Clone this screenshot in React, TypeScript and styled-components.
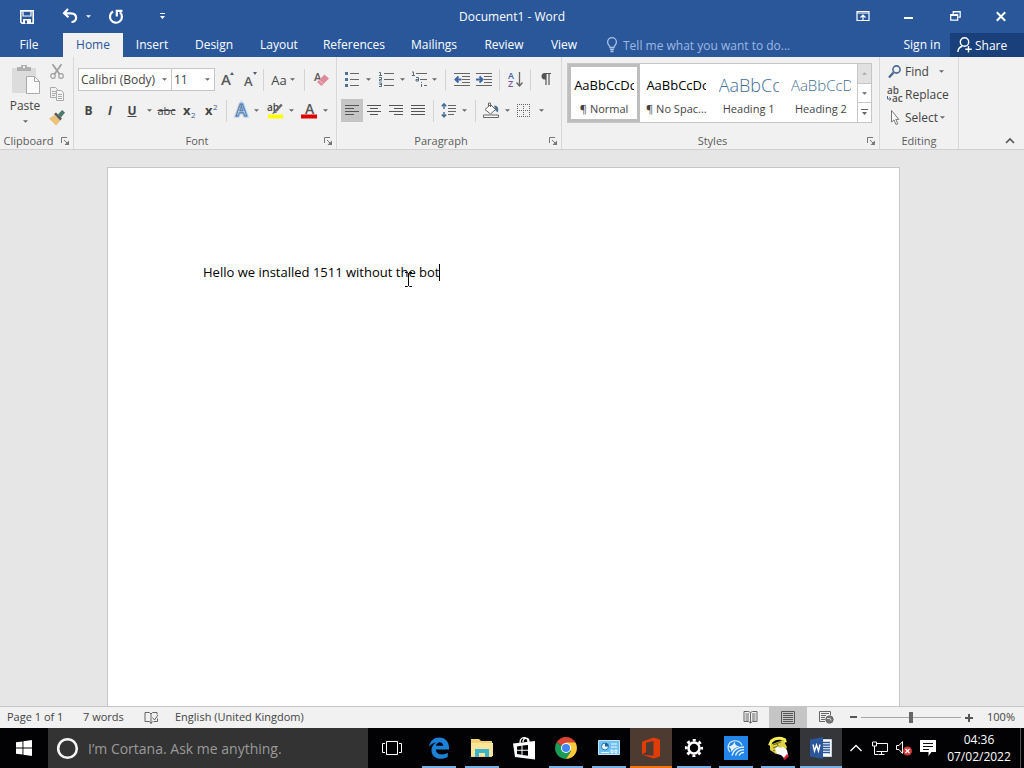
import React from "react";
import styled, { createGlobalStyle } from "styled-components";

const GlobalStyle = createGlobalStyle`
  *, *::before, *::after { box-sizing: border-box; }
  body { margin: 0; font-family: "Open Sans", "Noto Sans", sans-serif; font-size: 12px; color: #444; }
  button, input, select { font: inherit; color: inherit; margin: 0; padding: 0; border: 0; background: none; border-radius: 0; }
  p, h1 { margin: 0; }
  svg { display: block; flex: none; overflow: visible; }
`;

const Shell = styled.div`
  display: flex;
  flex-direction: column;
  min-height: 100vh;
`;

/* ---------- title bar and tabs ---------- */

const TitleBar = styled.header`
  display: grid;
  grid-template-columns: 1fr auto 1fr;
  align-items: center;
  height: 33px;
  background: #2a579a;
  color: #fff;
`;

const QuickAccess = styled.div`
  display: flex;
  align-items: center;
  padding-left: 12px;
`;

const DocTitle = styled.h1`
  font-size: 12px;
  font-weight: 400;
  line-height: 33px;
`;

const WindowControls = styled.div`
  display: flex;
  justify-content: flex-end;
`;

const PlainButton = styled.button<{ $w: number; $h?: number; $on?: boolean; $ml?: number }>`
  display: flex;
  align-items: center;
  justify-content: center;
  flex: none;
  width: ${(p) => p.$w}px;
  height: ${(p) => p.$h ?? 23}px;
  margin-left: ${(p) => p.$ml ?? 0}px;
  background: ${(p) => (p.$on ? "#c5c5c5" : "none")};
`;

const TabBar = styled.nav`
  display: flex;
  height: 24px;
  background: #2a579a;
  color: #fff;
`;

const Tab = styled.button<{ $w: number; $active?: boolean }>`
  width: ${(p) => p.$w}px;
  height: 24px;
  line-height: 24px;
  text-align: center;
  white-space: nowrap;
  background: ${(p) => (p.$active ? "#f1f1f1" : "none")};
  color: ${(p) => (p.$active ? "#2a579a" : "#fff")};
`;

const FileTab = styled(Tab)`
  margin-right: 5px;
`;

const TellMe = styled.label`
  display: flex;
  align-items: center;
  gap: 5px;
  flex: 1;
  padding-left: 15px;
  input { flex: 1; min-width: 0; height: 24px; outline: 0; }
  input::placeholder { color: #9db8e2; opacity: 1; }
`;

const ShareButton = styled.button`
  display: flex;
  align-items: center;
  gap: 3px;
  width: 74px;
  height: 24px;
  padding-left: 7px;
  background: #19407a;
`;

/* ---------- ribbon ---------- */

const Ribbon = styled.section`
  display: flex;
  height: 93px;
  background: #f1f1f1;
  border-bottom: 1px solid #d2d0d0;
`;

const GroupBox = styled.div<{ $w: number }>`
  display: flex;
  flex-direction: column;
  flex: none;
  width: ${(p) => p.$w}px;
  padding-top: 3px;
  border-right: 1px solid #d8d8d8;
`;

const GroupBody = styled.div`
  flex: 1;
  min-height: 0;
`;

const GroupFooter = styled.div`
  display: flex;
  height: 16px;
  align-items: center;
  line-height: 16px;
  color: #5c5c5c;
`;

const GroupLabel = styled.span`
  flex: 1;
  text-align: center;
  font-size: 11px;
`;

const Rows = styled.div`
  display: flex;
  flex-direction: column;
  gap: 8px;
  padding: 8px 0 0 4px;
`;

const Row = styled.div`
  display: flex;
  align-items: center;
  height: 23px;
`;

const Divider = styled.i<{ $ml: number; $mr: number }>`
  flex: none;
  width: 1px;
  height: 22px;
  margin: 0 ${(p) => p.$mr}px 0 ${(p) => p.$ml}px;
  background: #d4d4d4;
`;

const ClipboardBody = styled.div`
  display: flex;
`;

const PasteButton = styled.button`
  display: flex;
  flex-direction: column;
  align-items: center;
  width: 46px;
  margin-left: 2px;
  padding-top: 5px;
  line-height: 16px;
  svg + span { margin: 3px 0 6px; }
`;

const ClipboardTools = styled.div`
  display: flex;
  flex-direction: column;
`;

const Combo = styled.label<{ $w: number; $joined?: boolean }>`
  display: grid;
  grid-template-columns: 1fr 12px;
  align-items: center;
  width: ${(p) => p.$w}px;
  height: 23px;
  border: 1px solid #c6c6c6;
  border-left-width: ${(p) => (p.$joined ? 0 : 1)}px;
  background: #fff;
  select {
    grid-area: 1 / 1 / 2 / 3;
    appearance: none;
    width: 100%;
    height: 21px;
    padding-left: 2px;
  }
  svg { grid-area: 1 / 2; margin-left: 3px; pointer-events: none; }
`;

const Letter = styled.span<{ $size?: number; $bold?: boolean; $italic?: boolean; $line?: string }>`
  font-size: ${(p) => p.$size ?? 13}px;
  font-weight: ${(p) => (p.$bold ? 700 : 400)};
  font-style: ${(p) => (p.$italic ? "italic" : "normal")};
  text-decoration: ${(p) => p.$line ?? "none"};
  line-height: 18px;
`;

const Gallery = styled.div`
  display: flex;
  height: 60px;
  margin: 3px 7px 0 5px;
  border: 1px solid #c6c6c6;
  background: #fff;
`;

const StyleTile = styled.button<{ $selected?: boolean }>`
  display: flex;
  flex-direction: column;
  align-items: center;
  flex: 1;
  min-width: 0;
  padding-top: 3px;
  border: 3px solid ${(p) => (p.$selected ? "#bebebe" : "transparent")};
`;

const StyleSample = styled.span<{ $heading?: boolean; $size: number }>`
  width: 60px;
  overflow: hidden;
  white-space: nowrap;
  text-align: left;
  font-weight: ${(p) => (p.$heading ? 300 : 400)};
  font-size: ${(p) => p.$size}px;
  line-height: 30px;
  color: ${(p) => (p.$heading ? "#3f6f95" : "#000")};
`;

const StyleName = styled.span`
  white-space: nowrap;
  font-size: 11px;
  line-height: 20px;
`;

const GalleryScroll = styled.div`
  display: flex;
  flex-direction: column;
  width: 14px;
  border-left: 1px solid #c6c6c6;
`;

const ScrollButton = styled.button<{ $off?: boolean }>`
  display: flex;
  align-items: center;
  justify-content: center;
  flex: 1;
  background: ${(p) => (p.$off ? "#e1e1e1" : "#fff")};
  & + & { border-top: 1px solid #c6c6c6; }
`;

const EditingList = styled.div`
  display: flex;
  flex-direction: column;
  padding-left: 7px;
`;

const EditingButton = styled.button<{ $gap: number }>`
  display: flex;
  align-items: center;
  height: 23px;
  span { margin: 0 ${(p) => p.$gap}px 0 2px; }
`;

const RibbonEnd = styled.div`
  display: flex;
  flex: 1;
  align-items: flex-end;
  justify-content: flex-end;
  padding-right: 4px;
`;

/* ---------- document ---------- */

const Workspace = styled.main`
  display: flex;
  flex: 1;
  justify-content: center;
  padding: 17px 17px 0 0;
  background: #e6e6e6;
`;

const Paper = styled.article`
  position: relative;
  width: 793px;
  max-width: 100%;
  padding: 95px 95px 0;
  background: #fff;
  border: 1px solid #c6c6c6;
  border-bottom: 0;
`;

const Paragraph = styled.p`
  display: flex;
  align-items: center;
  font-size: 13px;
  line-height: 19px;
  color: #000;
`;

const Caret = styled.i`
  width: 1px;
  height: 17px;
  background: #000;
`;

const Pointer = styled.svg`
  position: absolute;
  left: 296px;
  top: 104px;
`;

/* ---------- status bar ---------- */

const StatusBar = styled.footer`
  display: flex;
  align-items: center;
  height: 22px;
  padding: 0 9px 0 7px;
  background: #f1f1f1;
  border-top: 1px solid #c6c6c6;
  font-size: 11px;
  line-height: 20px;
`;

const StatusItem = styled.span<{ $w?: number }>`
  width: ${(p) => (p.$w ? p.$w + "px" : "auto")};
  height: 21px;
  white-space: nowrap;
`;

const Language = styled(StatusItem)`
  margin-left: 16px;
`;

const StatusRight = styled.div`
  display: flex;
  align-items: center;
  margin-left: auto;
`;

const ZoomRange = styled.input`
  appearance: none;
  width: 100px;
  height: 21px;
  background: linear-gradient(#a6a6a6, #a6a6a6) center / 100% 1px no-repeat;
  &::-webkit-slider-thumb { appearance: none; width: 4px; height: 11px; background: #666; }
`;

const ZoomValue = styled.span`
  width: 38px;
  height: 21px;
  text-align: right;
`;

/* ---------- taskbar ---------- */

const TaskBar = styled.footer`
  display: flex;
  height: 40px;
  background: #020204;
  color: #fff;
`;

const SearchBox = styled.label`
  display: flex;
  align-items: center;
  flex: 0 1 320px;
  gap: 9px;
  padding-left: 8px;
  background: #333;
  input { flex: 1; min-width: 0; font-size: 14px; outline: 0; }
  input::placeholder { color: #9a9a9a; opacity: 1; }
`;

const Apps = styled.div`
  display: flex;
  flex: 0 1 424px;
  margin-left: 2px;
`;

const AppButton = styled.button<{ $state?: "open" | "alert" | "active" }>`
  display: flex;
  flex: 1;
  align-items: center;
  justify-content: center;
  background-color: ${(p) => (p.$state === "alert" ? "#4d3a30" : p.$state === "active" ? "#34363a" : "transparent")};
  background-image: ${(p) =>
    p.$state === "alert"
      ? "linear-gradient(#f2730c, #f2730c)"
      : p.$state
        ? "linear-gradient(#76b0e4, #76b0e4)"
        : "none"};
  background-repeat: no-repeat;
  background-position: center bottom;
  background-size: ${(p) => (p.$state === "open" ? "34px" : "100%")} 2px;
`;

const Tray = styled.div`
  display: flex;
  align-items: center;
  margin-left: auto;
  padding-right: 3px;
`;

const Clock = styled.time`
  width: 76px;
  padding-left: 2px;
  text-align: center;
  line-height: 17px;
`;

const ShowDesktop = styled.button`
  width: 1px;
  height: 40px;
  margin-left: 4px;
  background: #555;
`;

/* ---------- icons ---------- */

const Down = ({ c = "#666", s = 5 }: { c?: string; s?: number }) => (
  <svg width={s} height="3" viewBox="0 0 6 3" fill={c}><path d="M0 0h6L3 3z" /></svg>
);

type IconProps = { w?: number; h?: number; children: React.ReactNode };
const Icon = ({ w = 16, h = 16, children }: IconProps) => (
  <svg width={w} height={h} viewBox={`0 0 ${w} ${h}`} fill="none" stroke="#666">{children}</svg>
);

const SaveIcon = () => (
  <Icon>
    <path d="M1.800 1.800h12.400v12.400H3l-1.200-1.200z" stroke="#fff" strokeWidth="1.600" />
    <path d="M4 2h8v5H4z" stroke="#fff" strokeWidth="1.200" />
    <path d="M4 10h8v4.500H4z" fill="#fff" stroke="none" /><path d="M6 11.500h2v3H6z" fill="#2a579a" stroke="none" />
  </Icon>
);
const UndoIcon = () => (
  <Icon>
    <path d="M6 0 2 4.200l4.500 4M2.500 4.300h6.500c7 .5 6.500 8.500.5 8.700" stroke="#fff" strokeWidth="2.200" />
  </Icon>
);
const RepeatIcon = () => (
  <Icon>
    <path d="M5 2.500a6 6 0 1 0 7 .8" stroke="#fff" strokeWidth="2.200" />
    <path d="M8.800 7.500V1.900h5.700" stroke="#fff" strokeWidth="2.200" />
  </Icon>
);
const CustomizeIcon = () => (
  <svg width="7" height="7" viewBox="0 0 7 7" fill="#fff"><path d="M1 0h5v1H1zM1 3h5L3.500 6z" /></svg>
);
const BulbIcon = () => (
  <Icon w={12}>
    <path d="M4 10.500C4 8.500 1.600 8 1.600 5a4.400 4.400 0 0 1 8.800 0c0 3-2.400 3.500-2.400 5.500zM4 12.500h4M4.500 14.500h3" stroke="#a9c1e6" strokeWidth="1.300" />
  </Icon>
);
const ShareIcon = () => (
  <Icon w={15}>
    <circle cx="7.500" cy="5" r="4.200" stroke="#fff" strokeWidth="1.400" />
    <path d="M.800 15c.3-3.500 2-5.200 4.500-5.800M11.500 9v6.500M8.300 12.300h6.500" stroke="#fff" strokeWidth="1.400" />
  </Icon>
);
const RibbonOptionsIcon = () => (
  <Icon w={14} h={12}>
    <path d="M1 .500h12v9H1zM1 2h12" stroke="#fff" strokeWidth="1.200" /><path d="M7 9V4.500M4.500 6.500 7 4l2.500 2.500" stroke="#fff" strokeWidth="1.200" />
  </Icon>
);
const MinimizeIcon = () => <Icon w={10} h={10}><path d="M0 6h9" stroke="#fff" strokeWidth="2" /></Icon>;
const RestoreIcon = () => (
  <Icon w={11} h={11}><path d="M.700 3.700h7v5.500h-7zM.200 4.500h8M3.200 3V.700h7v5.500H8.500M2.700 1h8" stroke="#fff" strokeWidth="1.200" /></Icon>
);
const CloseIcon = () => <Icon w={10} h={10}><path d="m.800.300 8.400 8.400m0-8.400L.800 8.700" stroke="#fff" strokeWidth="2" /></Icon>;

const PasteIcon = () => (
  <Icon w={30} h={30}>
    <path d="M2 3h24v25H2z" fill="#dcdcdc" stroke="none" />
    <path d="M7 2h4V0h6v2h4v4H7z" fill="#b0b0b0" stroke="none" /><path d="M13 1h2v2h-2z" fill="#eee" stroke="none" />
    <path d="M16.500 11.500h8l5 5v12h-13z" fill="#fafafa" stroke="#aaa" /><path d="M24.500 11.500v5h5" stroke="#aaa" />
  </Icon>
);
const CutIcon = () => (
  <Icon>
    <path d="M3.500.300 10.800 10.500M12.500.300 5.200 10.500" stroke="#a0a0a0" strokeWidth="1.800" />
    <circle cx="4" cy="12" r="2.300" stroke="#a0a0a0" strokeWidth="1.200" /><circle cx="12" cy="12" r="2.300" stroke="#a0a0a0" strokeWidth="1.200" />
  </Icon>
);
const CopyIcon = () => (
  <Icon>
    <path d="M1.500.500h5l2 2v8h-7zM3 4.500h4M3 6.500h4M3 8.500h3" stroke="#aaa" />
    <path d="M7.500 3.500h5l2 2.500v7.500h-7z" fill="#f6f6f6" stroke="#aaa" /><path d="M9 7.500h4M9 9.500h4M9 11.500h4" stroke="#aaa" />
  </Icon>
);
const PainterIcon = () => (
  <Icon>
    <path d="M0 8.500 5.500 5l6 5.500-4.500 5z" fill="#ecc27a" stroke="none" /><path d="m5 4 2-1.500 6 6-1.800 2z" fill="#5b5b5b" stroke="none" />
    <path d="m9 4.500 4-4.500 3 2.500-4 5z" fill="#4c7a68" stroke="none" />
  </Icon>
);
const LauncherIcon = () => (
  <Icon w={8} h={8}><path d="M.500 6V.500H6M3 3l3.500 3.500" stroke="#777" /><path d="M8 3.500V8H3.500z" fill="#777" stroke="none" /></Icon>
);
const SizeUp = ({ up }: { up?: boolean }) => (
  <Icon w={17} h={18}>
    <text x="2" y={up ? 14 : 15} fontSize={up ? 15 : 13} fontWeight="600" fill="#595959" stroke="none">A</text>
    <path d={up ? "M11 4h4l-2-3z" : "M11 1h4l-2 3z"} fill="#4d5d7a" stroke="none" />
  </Icon>
);
const ClearFormatIcon = () => (
  <Icon>
    <text x="1" y="9" fontSize="11" fontWeight="600" fill="#595959" stroke="none">A</text>
    <path d="m4 10 7.500-7.500L16 6.500 8.500 14z" fill="#e08a9a" stroke="none" /><path d="m6 8 4.500 4" stroke="#f3c0ca" />
  </Icon>
);
const TextEffectIcon = () => (
  <Icon>
    <text x="3" y="13" fontSize="16" fontWeight="600" fill="#fff" stroke="#a9c8e8" strokeWidth="3">A</text>
    <text x="3" y="13" fontSize="16" fontWeight="600" fill="#fff" stroke="#4472a8" strokeWidth="1">A</text>
  </Icon>
);
const HighlightIcon = () => (
  <Icon w={17}>
    <text x="0" y="8" fontSize="10" fontWeight="600" fill="#444" stroke="none">ab</text>
    <path d="m14.800 1.500-6 6.500" stroke="#666" strokeWidth="2.500" /><path d="m5 11 2.500-4 2.500 2.500z" fill="#666" stroke="none" />
    <path d="M1 11.500h15v4H1z" fill="#ff0" stroke="none" />
  </Icon>
);
const FontColorIcon = () => (
  <Icon>
    <text x="4" y="11" fontSize="14" fontWeight="600" fill="#555" stroke="none">A</text>
    <path d="M0 11.500h16v4H0z" fill="#e00000" stroke="none" />
  </Icon>
);
const ScriptIcon = ({ raised }: { raised?: boolean }) => (
  <Icon w={14}>
    <text x="1" y="12" fontSize="13" fontWeight="700" fill="#444" stroke="none">x</text>
    <text x="9" y={raised ? 7 : 15} fontSize="8" fill="#3d5f8f" stroke="none">2</text>
  </Icon>
);
const BulletsIcon = () => (
  <Icon w={14}><path d="M5 1.500h9M5 7.500h9M5 13.500h9" /><path d="M0 0h3v3H0zM0 6h3v3H0zM0 12h3v3H0z" fill="#4a7391" stroke="none" /></Icon>
);
const NumberingIcon = () => (
  <Icon>
    <path d="M6 1.500h10M6 7.500h10M6 13.500h10" />
    <path d="M1 .500h1.500v3M1 3.500h3M1 5.500h2.500v2H1.500v1.500H4M1 11h2.500v3.500H1M1.500 12.500h2" stroke="#4f6f88" />
  </Icon>
);
const MultilevelIcon = () => (
  <Icon w={17}><path d="M5 1.500h11M9 7.500h7M13 13.500h3" /><path d="M1 0h1.500v3M.800 3.500H4M5 5.500h2.500V9H5V7.500h2.500M10.500 10v1M10.500 12v3" stroke="#4f6f88" /></Icon>
);
const IndentIcon = ({ out }: { out?: boolean }) => (
  <Icon w={17}>
    <path d="M0 1.500h16M8 4.500h8M8 7.500h8M8 10.500h8M0 13.500h16" />
    <path d={out ? "M7.500 7.500H2M4.500 4.500 1.500 7.500l3 3" : "M0 7.500h6M3.500 4.500l3 3-3 3"} stroke="#4166a5" strokeWidth="2" />
  </Icon>
);
const SortIcon = () => (
  <Icon w={15}>
    <text x="0" y="7" fontSize="9" fontWeight="600" fill="#4166a5" stroke="none">A</text>
    <text x="0" y="15" fontSize="9" fontWeight="600" fill="#8058a0" stroke="none">Z</text>
    <path d="M11.500 0v13.500M8.500 10.500l3 3.500 3-3.500" strokeWidth="1.300" />
  </Icon>
);
const PilcrowIcon = () => (
  <Icon w={12} h={14}><path d="M6 1v11M9 1v11M5 .500h6" stroke="#555" strokeWidth="1.200" /><path d="M6 0H4.500C.5 0 .5 6.500 4.500 6.500H6z" fill="#555" stroke="none" /></Icon>
);
const alignPaths = {
  left: "M1 2.500h14M1 5.500h9M1 8.500h14M1 11.500h9",
  center: "M1 2.500h14M4 5.500h8M1 8.500h14M4 11.500h8",
  right: "M1 2.500h14M6 5.500h9M1 8.500h14M6 11.500h9",
  justify: "M1 2.500h14M1 5.500h14M1 8.500h14M1 11.500h14",
};
const AlignIcon = ({ kind }: { kind: keyof typeof alignPaths }) => <Icon><path d={alignPaths[kind]} stroke="#555" /></Icon>;
const SpacingIcon = () => (
  <Icon><path d="M7 2.500h8M7 5.500h8M7 8.500h8M7 11.500h6" /><path d="M3 1v5M3 9v5M.800 3.300 3 .800 5.200 3.300M.800 11.500 3 14 5.200 11.500" stroke="#3f6a94" strokeWidth="1.400" /></Icon>
);
const ShadingIcon = () => (
  <Icon><path d="m2 6.500 5.500-5 5 5-5 4.500zM5.500 3.500V0h2v4" fill="#fff" /><path d="M11 2.500c4 0 5 3 3.800 7l-2.300-2z" fill="#4a7391" stroke="none" /><path d="M.500 12h15v2.500H.500z" fill="#fff" /></Icon>
);
const BordersIcon = () => (
  <Icon w={14} h={14}><path d="M.500 0v13M6.500 0v13M12.500 0v13M0 .500h13M0 6.500h13M0 12.500h13" strokeDasharray="1 1" /></Icon>
);
const FindIcon = () => (
  <Icon><circle cx="9.500" cy="5.500" r="3.600" stroke="#4b6a92" strokeWidth="1.600" /><path d="m6.500 8.500-4.500 5" stroke="#4b6a92" strokeWidth="2.400" /></Icon>
);
const ReplaceIcon = () => (
  <Icon w={16} h={18}>
    <text x="0" y="8" fontSize="10" fontWeight="600" fill="#555" stroke="none">ab</text>
    <text x="5" y="16" fontSize="10" fontWeight="600" fill="#555" stroke="none">ac</text>
    <path d="M.500 10v3H4M2.500 11.300 4 13l-1.500 1.700" stroke="#4b6a92" />
  </Icon>
);
const SelectIcon = () => (
  <Icon><path d="M4.500.500v11.500l2.500-2 2 4.500 1.800-.800-2-4.300h3z" fill="#fff" stroke="#777" /></Icon>
);
const CollapseIcon = () => <Icon w={10} h={8}><path d="m1 6 4-4 4 4" stroke="#555" strokeWidth="1.600" /></Icon>;
const ProofIcon = () => (
  <Icon w={15} h={14}><path d="M7 12.500V3L5.500 1.500H1v9h4.500L7 12.500l1.500-2M7 3l1.500-1.500H13v2M8.500 6.500l2 2.500 3.500-5M13.500 7.500v3H9.500" /></Icon>
);
const ReadIcon = () => (
  <Icon w={15} h={14}><path d="M7.500 2v10M7.500 1.500l-2-1H1v10h4.500l2 1.500 2-1.500H14v-10H9.500zM2.500 3H6M2.500 5H6M2.500 7H6M9 3h3.500M9 5h3.500M9 7h3.500M2.500 9H6M9 9h3.500" stroke="#666" /></Icon>
);
const PrintIcon = () => <Icon w={14} h={14}><path d="M.500.500h13v12H.500zM2 2.500h10M2 4.500h10M2 6.500h10M2 8.500h10M2 10.500h10" stroke="#555" /></Icon>;
const WebIcon = () => (
  <Icon w={15} h={14}><path d="M6 10.500H.500v-10h11V4M2 2.500h8M2 4.500h5M2 6.500h4M2 8.500h4" stroke="#666" /><circle cx="10.500" cy="8.500" r="3.700" fill="#777" /><path d="M8 7.500h3l1 2" stroke="#ddd" /></Icon>
);

const WindowsIcon = () => (
  <Icon><path d="M0 2.300 6.500 1.400v6.200H0zM7.400 1.300 16 0v7.600H7.400zM0 8.400h6.500v6.200L0 13.700zM7.400 8.400H16V16l-8.600-1.300z" fill="#fff" stroke="none" /></Icon>
);
const CortanaIcon = () => <Icon w={23} h={23}><circle cx="11.500" cy="11.500" r="9.300" stroke="#f4f4f4" strokeWidth="2.600" /></Icon>;
const TaskViewIcon = () => (
  <Icon w={20} h={14}><path d="M4.500.500h11v13h-11zM3 2.500H.500v9H3M17 2.500h2.500v9H17" stroke="#fff" /></Icon>
);
const EdgeIcon = () => (
  <Icon w={22} h={22}>
    <path d="M1 9.800C2 3.800 6 .500 11.300.500 17.500.500 21 5 21 10.500v2H7.800c.3 5.600 7.500 6.100 12 3.200v4.400C11.500 24.300 3.200 20.500 3.500 13c.1-3.500 2-6 4.600-7.500C4.900 6 2.800 7.500 1 9.800zM8 8.800h7.200C15 3.900 8.800 4 8 8.800z" fill="#1b80d6" stroke="none" fillRule="evenodd" />
  </Icon>
);
const FolderIcon = () => (
  <Icon w={22} h={20}>
    <path d="M0 1h8l2 2h11v16H0z" fill="#f3d274" stroke="none" /><path d="M0 5h22v13H0z" fill="#fbe59c" stroke="none" />
    <path d="M4 11h14v8h-4v-4H8v4H4z" fill="#3bb3c8" stroke="none" />
  </Icon>
);
const StoreIcon = () => (
  <Icon w={22} h={24}>
    <path d="M7 7c0-7 8-7 8-1M10 6c0-5 6-5 6 0" stroke="#fff" strokeWidth="1.300" />
    <path d="M0 7.500 22 5v18.500L2 21z" fill="#fff" stroke="none" />
    <path d="m4 10.500 4.500-.7v4H4zM9.500 9.600 15 9v4.800H9.500zM4 14.700h4.500v4L4 18zM9.500 14.700H15v5l-5.500-.8z" fill="#020204" stroke="none" />
  </Icon>
);
const ChromeIcon = () => (
  <Icon w={22} h={22}>
    <g stroke="none"><path d="M11 11 1.500 5.500a11 11 0 0 1 19 0z" fill="#db4437" /><path d="M11 11 1.500 5.500A11 11 0 0 0 11 22l5-8z" fill="#1a9c57" /><path d="M11 11V5.500h9.500A11 11 0 0 1 11 22l5-8z" fill="#fbcb3c" />
      <circle cx="11" cy="11" r="5" fill="#fff" /><circle cx="11" cy="11" r="4" fill="#4285f4" /></g>
  </Icon>
);
const ControlPanelIcon = () => (
  <Icon w={22} h={16}>
    <path d="M.500.500h21v14H.500z" fill="#6fc0ee" stroke="#bfe4f8" /><circle cx="7" cy="6.500" r="3.500" fill="#e6f6ff" stroke="#2579b5" /><path d="M7 6.500V3a3.500 3.500 0 0 1 3.500 3.500z" fill="#205f96" stroke="none" />
    <path d="M13 4h6M13 7h6M3 12.500h8M13 10h2v3h-2zM17 10h2v3h-2z" stroke="#eefaff" />
  </Icon>
);
const OfficeIcon = () => (
  <Icon w={18} h={22}><path d="M0 4.800 11.500.500 18 2.400v17.200l-6.500 2L0 17.400l11.500 1.400V4L4 5.800v9.400l-4 2.200z" fill="#e03c06" stroke="none" /></Icon>
);
const GearIcon = () => (
  <Icon w={20} h={20}><circle cx="10" cy="10" r="5.500" stroke="#fff" strokeWidth="2.600" /><circle cx="10" cy="10" r="7.800" stroke="#fff" strokeWidth="2.600" strokeDasharray="3 3.126" strokeDashoffset="1.500" /></Icon>
);
const BlueAppIcon = () => (
  <Icon w={24} h={24}>
    <path d="M0 0h24v24H0z" fill="#2385ea" stroke="none" />
    <path d="M6 16C2.500 12 4 6.500 9 5c4-1 8 1 9 4.500" stroke="#d4e9ff" strokeWidth="1.200" />
    <path d="M10.500 5c.5 4 1.500 5 5.500 5.500-4 .5-7 2.500-8.500 5.500-.5-3-1-4.500-3.500-5.500 4-.5 5.500-1.500 6.500-5.500z" fill="#e7f4ff" stroke="none" />
    <path d="M8 19.500c1-5 5-8.300 12-8.500M11.500 19.500c1-3.300 4-5.500 8.500-5.800M15 19.500c.8-1.800 2.500-3 5-3.200" stroke="#e7f4ff" strokeWidth="1.300" />
  </Icon>
);
const PhoneIcon = () => (
  <Icon w={24} h={24}>
    <path d="M4 9 17 4l4 7-2 5-9 2-6-4z" fill="#ded249" stroke="none" />
    <path d="m3.500 9.500 2-4.500C9 2 14 1.500 18.500 3.500l1 3" stroke="#f6ef55" strokeWidth="3" />
    <path d="m7 9 8-3M7 12l5-2M7 15l4-2M11 8l2 3" stroke="#6d6714" />
    <path d="m9 13 3-3 2 2 3-1 4 3 1 5-4 3-3-3-4-1z" fill="#fff" stroke="none" /><path d="m17 23 4-5 2 2-4 4z" fill="#d1203b" stroke="none" />
  </Icon>
);
const WordIcon = () => (
  <Icon w={22} h={22}>
    <path d="M11 2.500h10.500v17H11z" fill="#fff" stroke="#c8d6ec" /><path d="M13 5.500h7M13 8h7M13 10.500h7M13 13h7M13 15.500h7" stroke="#2b579a" strokeWidth="1.300" />
    <path d="M0 2.500 13 0v22L0 19.500z" fill="#2b579a" stroke="none" /><path d="m3 7.500 1.500 6.500 2-6 2 6 1.500-6.500" stroke="#fff" strokeWidth="1.400" />
  </Icon>
);
const TrayUpIcon = () => <Icon w={12} h={8}><path d="m.500 7 5.500-5.500L11.500 7" stroke="#fff" strokeWidth="1.300" /></Icon>;
const NetworkIcon = () => (
  <Icon><path d="M4 3.500h11.500v8H4.500M9.500 11.500v3M6.500 14.500h6M.500 2h4v4h-4zM2.500 6v8.500H6" stroke="#fff" /></Icon>
);
const VolumeIcon = () => (
  <Icon><path d="M.500 5.500H3l3.500-4v12L3 9.500H.500z" stroke="#fff" /><circle cx="11.500" cy="11" r="4.500" fill="#d23a3a" stroke="none" /><path d="m9.500 9 4 4m0-4-4 4" stroke="#fff" strokeWidth="1.200" /></Icon>
);
const ActionIcon = () => (
  <Icon><path d="M0 0h16v12h-4.500L8.500 16v-4H0z" fill="#fff" stroke="none" /><path d="M3 3.500h10M3 6.500h10M3 9.500h6" stroke="#111" /></Icon>
);

/* ---------- composition ---------- */

const Group = ({ name, width, launcher = true, children }: { name: string; width: number; launcher?: boolean; children: React.ReactNode }) => (
  <GroupBox $w={width}>
    <GroupBody>{children}</GroupBody>
    <GroupFooter>
      <GroupLabel>{name}</GroupLabel>
      {launcher && <PlainButton $w={16} $h={16} aria-label={`${name} settings`}><LauncherIcon /></PlainButton>}
    </GroupFooter>
  </GroupBox>
);

const Tool = ({ label, w = 22, on, ml, children }: { label: string; w?: number; on?: boolean; ml?: number; children: React.ReactNode }) => (
  <PlainButton $w={w} $on={on} $ml={ml} aria-label={label}>{children}</PlainButton>
);

const tabs: [string, number][] = [
  ["Home", 60], ["Insert", 58], ["Design", 66], ["Layout", 64], ["References", 86], ["Mailings", 74], ["Review", 66], ["View", 54],
];

const styleTiles = [
  { sample: "AaBbCcDc", name: "¶ Normal", size: 13 },
  { sample: "AaBbCcDc", name: "¶ No Spac...", size: 13 },
  { sample: "AaBbCcD", name: "Heading 1", size: 18, heading: true },
  { sample: "AaBbCcD", name: "Heading 2", size: 15, heading: true },
];

const apps: { name: string; icon: React.ReactNode; state?: "open" | "alert" | "active" }[] = [
  { name: "Edge", icon: <EdgeIcon />, state: "open" },
  { name: "File Explorer", icon: <FolderIcon />, state: "open" },
  { name: "Store", icon: <StoreIcon /> },
  { name: "Chrome", icon: <ChromeIcon />, state: "open" },
  { name: "Control Panel", icon: <ControlPanelIcon />, state: "open" },
  { name: "Office", icon: <OfficeIcon />, state: "alert" },
  { name: "Settings", icon: <GearIcon />, state: "open" },
  { name: "Remote support", icon: <BlueAppIcon />, state: "open" },
  { name: "Phone dialer", icon: <PhoneIcon />, state: "open" },
  { name: "Word", icon: <WordIcon />, state: "active" },
];

export default function App() {
  return (
    <Shell>
      <GlobalStyle />
      <TitleBar>
        <QuickAccess>
          <PlainButton $w={30} aria-label="Save"><SaveIcon /></PlainButton>
          <PlainButton $w={24} $ml={16} aria-label="Undo"><UndoIcon /></PlainButton>
          <PlainButton $w={12} aria-label="Undo history"><Down c="#fff" /></PlainButton>
          <PlainButton $w={24} $ml={10} aria-label="Repeat"><RepeatIcon /></PlainButton>
          <PlainButton $w={20} $ml={24} aria-label="Customize toolbar"><CustomizeIcon /></PlainButton>
        </QuickAccess>
        <DocTitle>Document1 - Word</DocTitle>
        <WindowControls>
          <PlainButton $w={46} $h={30} aria-label="Ribbon display options"><RibbonOptionsIcon /></PlainButton>
          <PlainButton $w={46} $h={30} aria-label="Minimize"><MinimizeIcon /></PlainButton>
          <PlainButton $w={46} $h={30} aria-label="Restore"><RestoreIcon /></PlainButton>
          <PlainButton $w={46} $h={30} aria-label="Close"><CloseIcon /></PlainButton>
        </WindowControls>
      </TitleBar>

      <TabBar>
        <FileTab $w={58}>File</FileTab>
        {tabs.map(([name, w]) => <Tab key={name} $w={w} $active={name === "Home"}>{name}</Tab>)}
        <TellMe><BulbIcon /><input aria-label="Tell me" placeholder="Tell me what you want to do..." /></TellMe>
        <Tab $w={56}>Sign in</Tab>
        <ShareButton><ShareIcon />Share</ShareButton>
      </TabBar>

      <Ribbon>
        <Group name="Clipboard" width={74}>
          <ClipboardBody>
            <PasteButton><PasteIcon /><span>Paste</span><Down /></PasteButton>
            <ClipboardTools>
              <Tool label="Cut" w={18}><CutIcon /></Tool>
              <Tool label="Copy" w={18}><CopyIcon /></Tool>
              <Tool label="Format painter" w={18}><PainterIcon /></Tool>
            </ClipboardTools>
          </ClipboardBody>
        </Group>

        <Group name="Font" width={263}>
          <Rows>
            <Row>
              <Combo $w={94}><select aria-label="Font"><option>Calibri (Body)</option></select><Down /></Combo>
              <Combo $w={43} $joined><select aria-label="Font size"><option>11</option></select><Down /></Combo>
              <Tool label="Grow font" ml={1}><SizeUp up /></Tool>
              <Tool label="Shrink font" ml={1}><SizeUp /></Tool>
              <Divider $ml={2} $mr={4} />
              <Tool label="Change case" w={30}><Letter>Aa</Letter>&nbsp;<Down /></Tool>
              <Divider $ml={6} $mr={4} />
              <Tool label="Clear formatting" w={23}><ClearFormatIcon /></Tool>
            </Row>
            <Row>
              <Tool label="Bold" w={21}><Letter $bold $size={12}>B</Letter></Tool>
              <Tool label="Italic"><Letter $bold $italic $size={12}>I</Letter></Tool>
              <Tool label="Underline"><Letter $bold $size={12} $line="underline">U</Letter></Tool>
              <Tool label="Underline style" w={12}><Down /></Tool>
              <Tool label="Strikethrough" w={23}><Letter $size={11} $line="line-through">abc</Letter></Tool>
              <Tool label="Subscript"><ScriptIcon /></Tool>
              <Tool label="Superscript"><ScriptIcon raised /></Tool>
              <Divider $ml={4} $mr={4} />
              <Tool label="Text effects" w={20}><TextEffectIcon /></Tool>
              <Tool label="Text effects menu" w={10}><Down /></Tool>
              <Tool label="Highlight" ml={3}><HighlightIcon /></Tool>
              <Tool label="Highlight colours" w={10}><Down /></Tool>
              <Tool label="Font color" w={20} ml={3}><FontColorIcon /></Tool>
              <Tool label="Font colours" w={12}><Down /></Tool>
            </Row>
          </Rows>
        </Group>

        <Group name="Paragraph" width={225}>
          <Rows>
            <Row>
              <Tool label="Bullets"><BulletsIcon /></Tool>
              <Tool label="Bullet library" w={10}><Down /></Tool>
              <Tool label="Numbering" ml={2}><NumberingIcon /></Tool>
              <Tool label="Number library" w={10}><Down /></Tool>
              <Tool label="Multilevel list" ml={1}><MultilevelIcon /></Tool>
              <Tool label="List library" w={8}><Down /></Tool>
              <Divider $ml={7} $mr={5} />
              <Tool label="Decrease indent"><IndentIcon out /></Tool>
              <Tool label="Increase indent"><IndentIcon /></Tool>
              <Divider $ml={4} $mr={4} />
              <Tool label="Sort"><SortIcon /></Tool>
              <Divider $ml={4} $mr={4} />
              <Tool label="Show marks"><PilcrowIcon /></Tool>
            </Row>
            <Row>
              <Tool label="Align left" on><AlignIcon kind="left" /></Tool>
              <Tool label="Center"><AlignIcon kind="center" /></Tool>
              <Tool label="Align right"><AlignIcon kind="right" /></Tool>
              <Tool label="Justify"><AlignIcon kind="justify" /></Tool>
              <Divider $ml={4} $mr={4} />
              <Tool label="Line spacing"><SpacingIcon /></Tool>
              <Tool label="Line spacing menu" w={8}><Down /></Tool>
              <Divider $ml={7} $mr={4} />
              <Tool label="Shading"><ShadingIcon /></Tool>
              <Tool label="Shading colours" w={10}><Down /></Tool>
              <Tool label="Borders" ml={1}><BordersIcon /></Tool>
              <Tool label="Borders menu" w={12}><Down /></Tool>
            </Row>
          </Rows>
        </Group>

        <Group name="Styles" width={318}>
          <Gallery>
            {styleTiles.map((t, i) => (
              <StyleTile key={t.name} $selected={i === 0}>
                <StyleSample $size={t.size} $heading={t.heading}>{t.sample}</StyleSample>
                <StyleName>{t.name}</StyleName>
              </StyleTile>
            ))}
            <GalleryScroll>
              <ScrollButton $off aria-label="Previous styles"><svg width="5" height="3" viewBox="0 0 6 3" fill="#aaa"><path d="M0 3h6L3 0z" /></svg></ScrollButton>
              <ScrollButton aria-label="Next styles"><Down /></ScrollButton>
              <ScrollButton aria-label="More styles"><svg width="7" height="7" viewBox="0 0 7 7" fill="#666"><path d="M0 0h7v1H0zM1 3h5L3.500 6z" /></svg></ScrollButton>
            </GalleryScroll>
          </Gallery>
        </Group>

        <Group name="Editing" width={79} launcher={false}>
          <EditingList>
            <EditingButton $gap={10}><FindIcon /><span>Find</span><Down /></EditingButton>
            <EditingButton $gap={0}><ReplaceIcon /><span>Replace</span></EditingButton>
            <EditingButton $gap={2}><SelectIcon /><span>Select</span><Down /></EditingButton>
          </EditingList>
        </Group>
        <RibbonEnd><PlainButton $w={20} $h={16} aria-label="Collapse ribbon"><CollapseIcon /></PlainButton></RibbonEnd>
      </Ribbon>

      <Workspace>
        <Paper>
          <Paragraph>Hello we installed 1511 without the bot<Caret /></Paragraph>
          <Pointer width="9" height="16" viewBox="0 0 9 16" fill="none" stroke="#000">
            <path d="M1 .500h2.500l1 1 1-1H8M4.500 1v13M1 14.500h2.500l1-1 1 1H8" />
          </Pointer>
        </Paper>
      </Workspace>

      <StatusBar>
        <StatusItem $w={76}>Page 1 of 1</StatusItem>
        <StatusItem $w={60}>7 words</StatusItem>
        <PlainButton $w={16} $h={21} aria-label="Proofing"><ProofIcon /></PlainButton>
        <Language>English (United Kingdom)</Language>
        <StatusRight>
          <PlainButton $w={38} $h={21} aria-label="Read mode"><ReadIcon /></PlainButton>
          <PlainButton $w={38} $h={21} $on aria-label="Print layout"><PrintIcon /></PlainButton>
          <PlainButton $w={38} $h={21} aria-label="Web layout"><WebIcon /></PlainButton>
          <PlainButton $w={16} $h={21} aria-label="Zoom out"><Icon w={7} h={7}><path d="M0 3h7" strokeWidth="2" stroke="#555" /></Icon></PlainButton>
          <ZoomRange type="range" aria-label="Zoom" min={10} max={190} defaultValue={100} />
          <PlainButton $w={16} $h={21} aria-label="Zoom in"><Icon w={8} h={8}><path d="M0 4h8M4 0v8" strokeWidth="2" stroke="#555" /></Icon></PlainButton>
          <ZoomValue>100%</ZoomValue>
        </StatusRight>
      </StatusBar>

      <TaskBar>
        <PlainButton $w={48} $h={40} aria-label="Start"><WindowsIcon /></PlainButton>
        <SearchBox><CortanaIcon /><input aria-label="Search" placeholder="I’m Cortana. Ask me anything." /></SearchBox>
        <PlainButton $w={48} $h={40} aria-label="Task view"><TaskViewIcon /></PlainButton>
        <Apps>{apps.map((a) => <AppButton key={a.name} $state={a.state} aria-label={a.name}>{a.icon}</AppButton>)}</Apps>
        <Tray>
          <PlainButton $w={24} $h={40} aria-label="Hidden icons"><TrayUpIcon /></PlainButton>
          <PlainButton $w={24} $h={40} aria-label="Network"><NetworkIcon /></PlainButton>
          <PlainButton $w={24} $h={40} aria-label="Volume"><VolumeIcon /></PlainButton>
          <PlainButton $w={24} $h={40} aria-label="Notifications"><ActionIcon /></PlainButton>
          <Clock>04:36<br />07/02/2022</Clock>
          <ShowDesktop aria-label="Show desktop" />
        </Tray>
      </TaskBar>
    </Shell>
  );
}
